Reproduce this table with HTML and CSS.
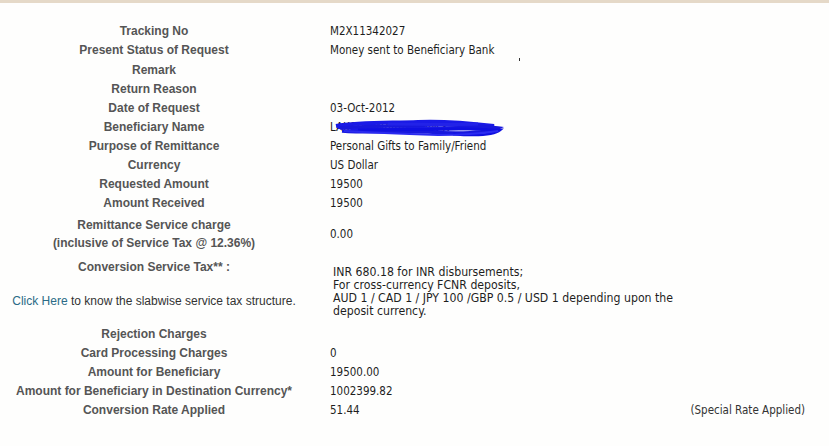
FILE: index.html
```html
<!DOCTYPE html>
<html>
<head>
<meta charset="utf-8">
<link rel="stylesheet" href="styles.css">
</head>
<body>
<div class="topbar"></div>
<div class="details">
  <div class="row"><div class="lbl">Tracking No</div><div class="val">M2X11342027</div></div>
  <div class="row"><div class="lbl">Present Status of Request</div><div class="val">Money sent to Beneficiary Bank<span class="speck"></span></div></div>
  <div class="row"><div class="lbl">Remark</div><div class="val"></div></div>
  <div class="row"><div class="lbl">Return Reason</div><div class="val"></div></div>
  <div class="row"><div class="lbl">Date of Request</div><div class="val">03-Oct-2012</div></div>
  <div class="row"><div class="lbl">Beneficiary Name</div><div class="val"><span class="redacted">LAKSHMINARAYANAN K<svg class="scribble" width="176" height="20" viewBox="0 0 176 20"><path d="M8 8 C30 4 60 5 90 4 C115 3 140 5 166 8 C150 11 110 10 80 11 C55 12 30 11 10 9" fill="none" stroke="#1a1ae6" stroke-width="4"/><path d="M12 10 C40 7 70 9 100 7 C125 6 150 8 170 10 C160 15 130 16 100 14 C70 13 40 15 14 13" fill="none" stroke="#1818dc" stroke-width="3.4"/><path d="M30 12 C60 11 95 12 120 11 C140 10 158 12 172 12 C166 17 150 18 125 16" fill="none" stroke="#1010e0" stroke-width="2.8"/><path d="M16 13 C50 15 80 16 110 17 C130 17 150 16 170 13" fill="none" stroke="#2a2af0" stroke-width="2.2"/><path d="M60 6 C90 6 120 7 150 6" fill="none" stroke="#2222e8" stroke-width="3"/></svg></span></div></div>
  <div class="row"><div class="lbl">Purpose of Remittance</div><div class="val">Personal Gifts to Family/Friend</div></div>
  <div class="row"><div class="lbl">Currency</div><div class="val">US Dollar</div></div>
  <div class="row"><div class="lbl">Requested Amount</div><div class="val">19500</div></div>
  <div class="row"><div class="lbl">Amount Received</div><div class="val">19500</div></div>
  <div class="row row-charge"><div class="lbl lbl-two">Remittance Service charge<br>(inclusive of Service Tax @ 12.36%)</div><div class="val val-mid">0.00</div></div>
  <div class="row row-tax">
    <div class="lbl-stack">
      <div class="lbl">Conversion Service Tax** :</div>
      <div class="slab"><a class="link" href="#">Click Here</a> to know the slabwise service tax structure.</div>
    </div>
    <div class="taxnote">INR 680.18 for INR disbursements;<br>For cross-currency FCNR deposits,<br>AUD 1 / CAD 1 / JPY 100 /GBP 0.5 / USD 1 depending upon the<br>deposit currency.</div>
  </div>
  <div class="row"><div class="lbl">Rejection Charges</div><div class="val"></div></div>
  <div class="row"><div class="lbl">Card Processing Charges</div><div class="val">0</div></div>
  <div class="row"><div class="lbl">Amount for Beneficiary</div><div class="val">19500.00</div></div>
  <div class="row"><div class="lbl">Amount for Beneficiary in Destination Currency*</div><div class="val">1002399.82</div></div>
  <div class="row"><div class="lbl">Conversion Rate Applied</div><div class="val val-split"><span>51.44</span><span class="special">(Special Rate Applied)</span></div></div>
</div>
</body>
</html>
```

FILE: styles.css
```css
html, body {
  margin: 0;
  padding: 0;
  background: #fefefd;
}
.topbar {
  height: 3px;
  background: #e5d9c8;
}
.details {
  padding: 19px 8px 0 8px;
}
.row {
  display: grid;
  grid-template-columns: 292px 1fr;
  min-height: 19px;
}
.lbl {
  font-family: "Liberation Sans", Arial, sans-serif;
  font-weight: bold;
  font-size: 12px;
  line-height: 19px;
  color: #555555;
  text-align: center;
}
.val {
  font-family: "DejaVu Sans Condensed", "DejaVu Sans", sans-serif;
  font-stretch: condensed;
  font-size: 11.5px;
  line-height: 19px;
  color: #1e1e1e;
  padding-left: 30px;
  padding-right: 16px;
}
.speck {
  display: inline-block;
  width: 1px;
  height: 3px;
  background: #333;
  margin-left: 25px;
  vertical-align: -7px;
}
.redacted {
  position: relative;
  display: inline-block;
}
.scribble {
  position: absolute;
  left: -2px;
  top: 0;
}
.row-charge {
  margin-top: 2px;
}
.lbl-two {
  line-height: 18px;
  padding: 1px 0;
}
.val-mid {
  align-self: center;
}
.row-tax {
  margin-top: 5px;
  margin-bottom: 7px;
}
.lbl-stack {
  display: flex;
  flex-direction: column;
  gap: 15px;
}
.slab {
  font-family: "Liberation Sans", Arial, sans-serif;
  font-size: 12px;
  line-height: 19px;
  color: #333333;
  text-align: center;
}
.link {
  color: #2b6b86;
  text-decoration: none;
}
.taxnote {
  font-family: "DejaVu Sans Condensed", "DejaVu Sans", sans-serif;
  font-stretch: condensed;
  font-size: 12.2px;
  line-height: 13px;
  color: #1e1e1e;
  padding-left: 33px;
  padding-top: 8px;
}
.val-split {
  display: flex;
  justify-content: space-between;
}
.special {
  color: #333333;
}
```
